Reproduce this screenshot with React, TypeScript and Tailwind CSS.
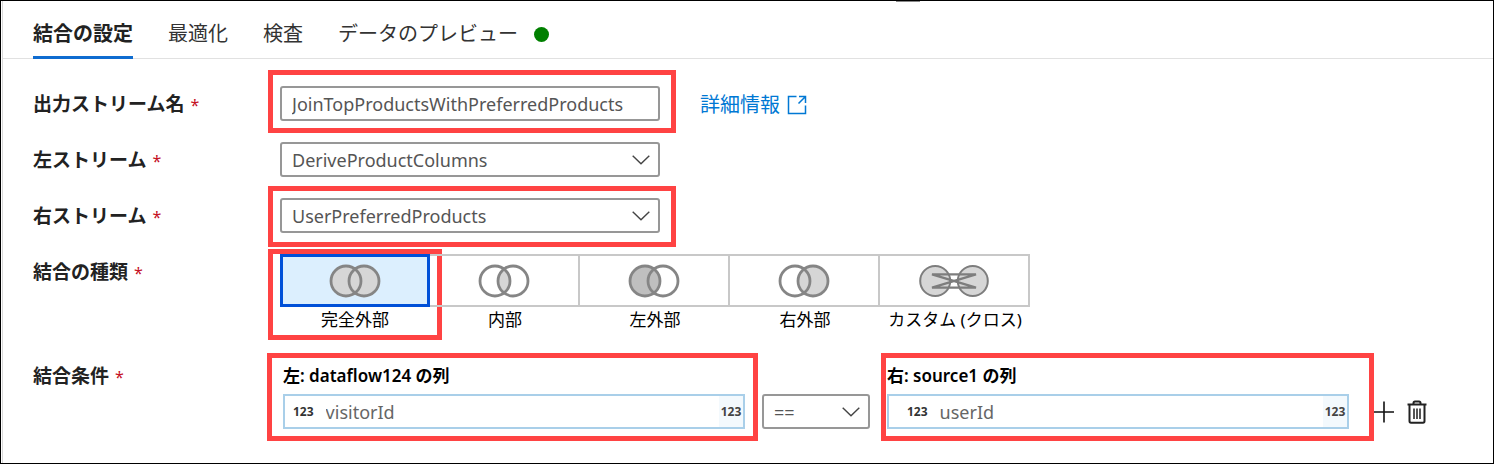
import { useState, type ReactNode } from "react";

function Highlight({ className }: { className: string }) {
  return (
    <span
      aria-hidden="true"
      className={`pointer-events-none absolute border-[5px] border-[#ff4343] ${className}`}
    />
  );
}

function Chevron() {
  return (
    <svg
      viewBox="0 0 18 10"
      className="pointer-events-none absolute top-1/2 right-2.5 h-2.5 w-[18px] -translate-y-1/2"
      fill="none"
      stroke="#444"
      strokeWidth="1.4"
      aria-hidden="true"
    >
      <path d="M0.7 0.7 L9 8.8 L17.3 0.7" />
    </svg>
  );
}

function SelectBox({
  id,
  options,
  label,
  className = "",
}: {
  id: string;
  options: string[];
  label?: string;
  className?: string;
}) {
  return (
    <div className={`relative ${className}`}>
      <select
        id={id}
        aria-label={label}
        className="block h-[35px] w-full appearance-none rounded-[3px] border-2 border-[#979797] bg-white pr-8 pl-2.5 text-lg text-[#555]"
      >
        {options.map((o) => (
          <option key={o}>{o}</option>
        ))}
      </select>
      <Chevron />
    </div>
  );
}

function Star() {
  return <span className="ml-1.5 text-base font-normal text-[#c50f1f]">*</span>;
}

const labelText = "text-[19px] leading-[37px] font-semibold text-[#222]";

function Row({
  htmlFor,
  label,
  children,
}: {
  htmlFor: string;
  label: string;
  children: ReactNode;
}) {
  return (
    <div className="flex h-[35px] items-start">
      <label htmlFor={htmlFor} className={`w-[247px] shrink-0 ${labelText}`}>
        {label}
        <Star />
      </label>
      {children}
    </div>
  );
}

type Kind = "full" | "inner" | "left" | "right" | "cross";

function JoinIcon({ kind }: { kind: Kind }) {
  if (kind === "cross") {
    return (
      <svg viewBox="0 0 70 34" className="h-[34px] w-[70px]" stroke="#7d7d7d" strokeWidth="2" aria-hidden="true">
        <circle cx="16.2" cy="17" r="15" fill="#d6d6d6" />
        <circle cx="53.8" cy="17" r="15" fill="#d6d6d6" />
        <path d="M13 10.4 H57 L13 23.6 H57 Z" fill="none" strokeWidth="2.2" />
      </svg>
    );
  }
  const lens = "M26 5 A15 15 0 0 1 26 29 A15 15 0 0 1 26 5 Z";
  const leftFill = kind === "full" ? "#d6d6d6" : kind === "left" ? "#bfbfbf" : "none";
  const rightFill = kind === "full" || kind === "right" ? "#d6d6d6" : "none";
  return (
    <svg viewBox="0 0 52 34" className="h-[34px] w-[52px]" aria-hidden="true">
      <circle cx="17" cy="17" r="15" fill={leftFill} />
      <circle cx="35" cy="17" r="15" fill={rightFill} />
      {(kind === "inner" || kind === "right") && <path d={lens} fill="#d6d6d6" />}
      {kind === "left" && <path d={lens} fill="#bfbfbf" />}
      <g fill="none" stroke="#858585" strokeWidth="2.8">
        <circle cx="17" cy="17" r="15" />
        <circle cx="35" cy="17" r="15" />
      </g>
    </svg>
  );
}

const joinTypes: { kind: Kind; name: string }[] = [
  { kind: "full", name: "完全外部" },
  { kind: "inner", name: "内部" },
  { kind: "left", name: "左外部" },
  { kind: "right", name: "右外部" },
  { kind: "cross", name: "カスタム (クロス)" },
];

function ColumnField({
  id,
  title,
  value,
  pad,
  highlight,
}: {
  id: string;
  title: string;
  value: string;
  pad: string;
  highlight: string;
}) {
  return (
    <div className="relative min-w-0 flex-1">
      <label htmlFor={id} className="block text-[17px] leading-9 font-semibold text-black">
        {title}
      </label>
      <div className={`flex h-[35px] items-center border-2 border-[#a9cfe9] bg-white ${pad}`}>
        <span className="text-xs font-bold text-[#333]">123</span>
        <input
          id={id}
          defaultValue={value}
          className="ml-3 min-w-0 flex-1 bg-transparent text-lg text-[#666] outline-none"
        />
        <span className="flex h-full w-6 items-center justify-center bg-[#f3f9fd] text-xs font-bold text-[#444]">
          123
        </span>
      </div>
      <Highlight className={highlight} />
    </div>
  );
}

export default function App() {
  const [join, setJoin] = useState<Kind>("full");
  const tab = "h-[58px] border-b-[3px] pt-[11px] text-xl";
  return (
    <main
      lang="ja"
      className="relative min-h-screen border border-black bg-white font-['Noto_Sans','Noto_Sans_CJK_JP',sans-serif]"
    >
      <span aria-hidden="true" className="absolute top-0 left-[60%] h-px w-6 bg-[#888]" />
      <div className="ml-px min-h-[462px] border-l border-[#d9d9d9]">
        <nav className="flex h-[58px] items-start gap-[35px] border-b border-[#e1e1e1] pl-[30px]">
          <button className={`${tab} border-[#0f6cd0] font-semibold text-[#222]`}>結合の設定</button>
          <button className={`${tab} border-transparent text-[#333]`}>最適化</button>
          <button className={`${tab} border-transparent text-[#333]`}>検査</button>
          <button className={`${tab} flex items-center gap-4 border-transparent text-[#333]`}>
            データのプレビュー
            <span className="size-[15px] rounded-full bg-[#008000]" />
          </button>
        </nav>

        <form className="flex flex-col gap-[21px] pt-[27px] pr-[66px] pl-[30px]">
          <Row htmlFor="output" label="出力ストリーム名">
            <div className="relative w-[380px]">
              <input
                id="output"
                defaultValue="JoinTopProductsWithPreferredProducts"
                className="block h-[35px] w-full rounded-[3px] border-2 border-[#979797] bg-white px-2.5 text-lg text-[#555] outline-none"
              />
              <Highlight className="-top-4 -right-4 -bottom-3 -left-3" />
            </div>
            <a href="#details" className="ml-10 flex items-center gap-[7px] text-xl leading-[37px] text-[#0078d4]">
              詳細情報
              <svg viewBox="0 0 20 20" className="size-5" fill="none" stroke="#0078d4" strokeWidth="1.5" aria-hidden="true">
                <path d="M9.5 1.5 H1.5 V18.5 H18.5 V10.5" />
                <path d="M12 1.5 H18.5 V8 M18.5 1.5 L11.5 8.5" />
              </svg>
            </a>
          </Row>
          <Row htmlFor="left-stream" label="左ストリーム">
            <SelectBox id="left-stream" options={["DeriveProductColumns"]} className="w-[380px]" />
          </Row>
          <Row htmlFor="right-stream" label="右ストリーム">
            <div className="relative w-[380px]">
              <SelectBox id="right-stream" options={["UserPreferredProducts"]} />
              <Highlight className="-top-3 -right-4 -bottom-3.5 -left-3" />
            </div>
          </Row>

          <fieldset className="flex items-start">
            <span id="join-label" className={`w-[247px] shrink-0 ${labelText}`}>
              結合の種類
              <Star />
            </span>
            <div role="radiogroup" aria-labelledby="join-label" className="flex">
              {joinTypes.map(({ kind, name }, i) => (
                <label key={kind} className="relative w-[150px] text-center text-[17px] leading-[26px] text-black">
                  <input
                    type="radio"
                    name="join"
                    checked={join === kind}
                    onChange={() => setJoin(kind)}
                    className="sr-only"
                  />
                  <span
                    className={`flex h-[53px] items-center justify-center ${
                      join === kind
                        ? "border-[3px] border-[#0050d8] bg-[#dceffe]"
                        : "border-y-2 border-r-2 border-[#c8c8c8]"
                    }`}
                  >
                    <JoinIcon kind={kind} />
                  </span>
                  {name}
                  {i === 0 && <Highlight className="-top-[5px] -right-3 -bottom-[7px] -left-3" />}
                </label>
              ))}
            </div>
          </fieldset>

          <div className="mt-1 flex items-start">
            <span className={`w-[250px] shrink-0 ${labelText}`}>
              結合条件
              <Star />
            </span>
            <div className="flex min-w-0 flex-1 items-end">
              <ColumnField
                id="left-column"
                title="左: dataflow124 の列"
                value="visitorId"
                pad="pl-2"
                highlight="-left-4 -right-[13px] -top-[5px] -bottom-3"
              />
              <SelectBox id="operator" label="演算子" options={["=="]} className="mx-[17px] w-[108px]" />
              <ColumnField
                id="right-column"
                title="右: source1 の列"
                value="userId"
                pad="pl-[18px]"
                highlight="-left-1.5 -right-[25px] -top-[5px] -bottom-3"
              />
              <div className="ml-6 flex h-[35px] items-center gap-3">
                <button type="button" aria-label="追加">
                  <svg viewBox="0 0 22 22" className="size-[22px]" stroke="#111" strokeWidth="1.6" aria-hidden="true">
                    <path d="M11 0.5 V21.5 M1 11 H21" />
                  </svg>
                </button>
                <button type="button" aria-label="削除">
                  <svg viewBox="0 0 20 24" className="h-6 w-5" fill="none" stroke="#222" strokeWidth="2" aria-hidden="true">
                    <path d="M0.5 4.5 H19.5" />
                    <path d="M6.5 4.5 V3 Q6.5 1.5 8 1.5 H12 Q13.5 1.5 13.5 3 V4.5" />
                    <path d="M2.5 4.5 V21 Q2.5 22.7 4 22.7 H16 Q17.5 22.7 17.5 21 V4.5" />
                    <path d="M7 8.5 V19 M10 8.5 V19 M13 8.5 V19" stroke="#555" strokeWidth="2" />
                  </svg>
                </button>
              </div>
            </div>
          </div>
        </form>
      </div>
    </main>
  );
}
